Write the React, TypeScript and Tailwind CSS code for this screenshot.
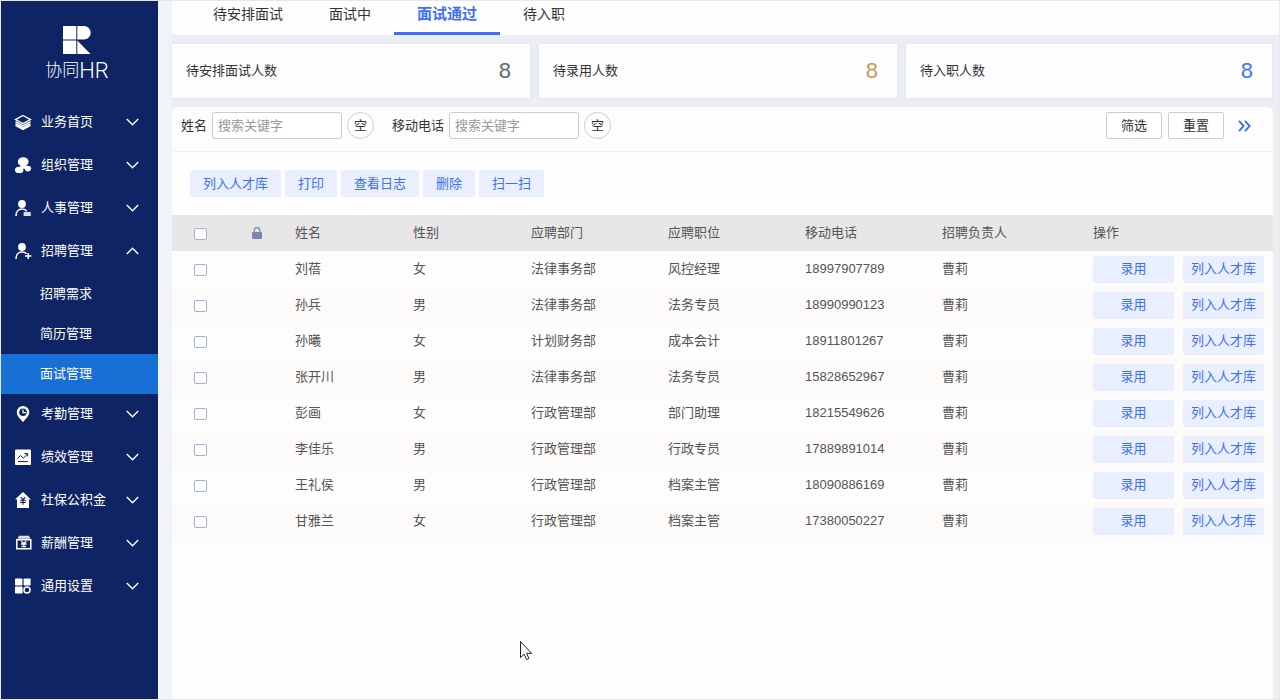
import cn from 'clsx'
import { FC, ReactNode } from 'react'

interface NavItem {
  name: string
  icon: ReactNode
  children?: string[]
}

interface Candidate {
  name: string
  sex: string
  dept: string
  position: string
  phone: string
  owner: string
}

const nav: NavItem[] = [
  {
    name: '业务首页',
    icon: (
      <>
        <path d="M8 1.5 15.5 5.6 8 9.6.5 5.6Z" fill="none" stroke="currentColor" strokeWidth="1.3" />
        <path d="M.5 7.6 8 11.6l7.5-4M.5 9.6 8 13.6l7.5-4M.5 11.4 8 15.4l7.5-4" fill="none" stroke="currentColor" strokeWidth="1.5" />
      </>
    ),
  },
  {
    name: '组织管理',
    icon: (
      <>
        <ellipse cx="8.2" cy="4.8" rx="5.4" ry="4.5" />
        <path d="M6 8h5l1 2.5-3 1.5-4-2Z" />
        <ellipse cx="4.2" cy="12.9" rx="4.2" ry="3.2" />
        <ellipse cx="12.9" cy="11.6" rx="3.2" ry="2.8" />
      </>
    ),
  },
  {
    name: '人事管理',
    icon: (
      <>
        <ellipse cx="7" cy="4" rx="3.9" ry="4" />
        <path d="M1 16C1 11.5 3.6 9 7 9c2.2 0 3.8.8 4.8 2.2" fill="none" stroke="currentColor" strokeWidth="1.5" />
        <rect x="8.6" y="12" width="7.2" height="4" fillOpacity=".85" />
      </>
    ),
  },
  {
    name: '招聘管理',
    icon: (
      <>
        <ellipse cx="7" cy="4" rx="3.9" ry="4" />
        <path d="M1 16C1 11.5 3.6 9 7 9c2.2 0 3.4.5 4.5 1.6M10 13h6.4M13.2 10v6" fill="none" stroke="currentColor" strokeWidth="1.5" />
      </>
    ),
    children: ['招聘需求', '简历管理', '面试管理'],
  },
  {
    name: '考勤管理',
    icon: (
      <>
        <path d="M8 0a6.2 6.2 0 0 0-6.2 6.2C1.8 10 5.5 13 8 16.2 10.5 13 14.2 10 14.2 6.2A6.2 6.2 0 0 0 8 0Z" />
        <circle cx="8" cy="6.2" r="3.8" className="fill-[#0f2464]" />
        <path d="M8 3.4v3.2h3" fill="none" stroke="currentColor" strokeWidth="1.2" />
      </>
    ),
  },
  {
    name: '绩效管理',
    icon: (
      <>
        <rect y=".5" width="16" height="15.5" rx="1" />
        <path d="M2.5 9.5 5.5 6.5 8.5 9.3 12.5 4.8M9.6 4.5h3v3M3 12.6h10" fill="none" stroke="#0f2464" strokeWidth="1" />
      </>
    ),
  },
  {
    name: '社保公积金',
    icon: (
      <>
        <path d="M8 0 16 7.5h-2V16H2V7.5H0Z" />
        <path d="M5.6 5.2 8 7.7l2.4-2.5M5.2 8.2h5.6M5.2 10.4h5.6M8 7.7v5" fill="none" stroke="#0f2464" strokeWidth="1.1" />
      </>
    ),
  },
  {
    name: '薪酬管理',
    icon: (
      <>
        <path d="M4 .8h10l1.5 3h-13Z" fillOpacity=".85" />
        <path d="M1.8 4.8h14v9H1.8Z" fill="none" stroke="currentColor" strokeWidth="1.5" />
        <path d="M6.2 6.2 8.8 8.4l2.6-2.2M6 9h5.6M6.5 11.6h4.6M8.8 8v4" fill="none" stroke="currentColor" strokeWidth="1.3" />
      </>
    ),
  },
  {
    name: '通用设置',
    icon: (
      <>
        <rect y=".5" width="7.4" height="7" rx=".8" />
        <rect x="8.6" y=".5" width="7" height="7" rx=".8" />
        <rect y="8.5" width="7.6" height="7" rx=".8" />
        <circle cx="12" cy="12" r="3" fill="none" stroke="currentColor" strokeWidth="1.5" />
      </>
    ),
  },
]

const tabs = ['待安排面试', '面试中', '面试通过', '待入职']

const stats = [
  { label: '待安排面试人数', value: 8, color: 'text-[#5f6f63]' },
  { label: '待录用人数', value: 8, color: 'text-[#c49c5a]' },
  { label: '待入职人数', value: 8, color: 'text-[#3d77f8]' },
]

const actions = ['列入人才库', '打印', '查看日志', '删除', '扫一扫']

const columns = ['姓名', '性别', '应聘部门', '应聘职位', '移动电话', '招聘负责人', '操作']

const candidates: Candidate[] = [
  { name: '刘蓓', sex: '女', dept: '法律事务部', position: '风控经理', phone: '18997907789', owner: '曹莉' },
  { name: '孙兵', sex: '男', dept: '法律事务部', position: '法务专员', phone: '18990990123', owner: '曹莉' },
  { name: '孙曦', sex: '女', dept: '计划财务部', position: '成本会计', phone: '18911801267', owner: '曹莉' },
  { name: '张开川', sex: '男', dept: '法律事务部', position: '法务专员', phone: '15828652967', owner: '曹莉' },
  { name: '彭画', sex: '女', dept: '行政管理部', position: '部门助理', phone: '18215549626', owner: '曹莉' },
  { name: '李佳乐', sex: '男', dept: '行政管理部', position: '行政专员', phone: '17889891014', owner: '曹莉' },
  { name: '王礼侯', sex: '男', dept: '行政管理部', position: '档案主管', phone: '18090886169', owner: '曹莉' },
  { name: '甘雅兰', sex: '女', dept: '行政管理部', position: '档案主管', phone: '17380050227', owner: '曹莉' },
]

const Chevron: FC<{ open?: boolean }> = ({ open }) => (
  <svg
    viewBox="0 0 13 8"
    className={cn('ml-auto h-2 w-[13px] shrink-0', open && 'rotate-180')}
    fill="none"
    stroke="currentColor"
    strokeWidth="1.4"
  >
    <path d="M.8 1l5.700 5.800L12.200 1" />
  </svg>
)

const Sidebar: FC = () => (
  <aside className="w-[157px] shrink-0 bg-[#0f2464] text-white">
    <div className="flex h-[101px] flex-col items-center pt-[25px] pr-[5px]">
      <svg viewBox="0 0 28 28" className="size-7" fill="currentColor">
        <path d="M0 0h13.3v13.5H0ZM14.3 0H21a6.75 6.75 0 0 1 0 13.5h-6.7ZM0 14.5h13.3V28H0ZM14.3 14.5 27.5 28H14.3Z" />
      </svg>
      <div className="mt-[5px] flex items-center leading-6 font-light">
        <span className="text-[17px]">协同</span>
        <span className="font-[Roboto] text-[22px]">HR</span>
      </div>
    </div>
    <nav>
      <ul>
        {nav.map((item) => (
          <li key={item.name}>
            <button
              type="button"
              className="mb-[3px] flex h-10 w-full items-center pr-[19px] pl-3.5"
            >
              <svg viewBox="0 0 16 16" className="size-4 shrink-0 overflow-visible" fill="currentColor">
                {item.icon}
              </svg>
              <span className="ml-2.5">{item.name}</span>
              <Chevron open={!!item.children} />
            </button>
            {item.children && (
              <ul>
                {item.children.map((child) => (
                  <li key={child}>
                    <a
                      href="#"
                      className={cn(
                        'flex h-10 items-center pl-[39px]',
                        child === '面试管理' && 'bg-[#186fd6]'
                      )}
                    >
                      {child}
                    </a>
                  </li>
                ))}
              </ul>
            )}
          </li>
        ))}
      </ul>
    </nav>
  </aside>
)

const SearchField: FC<{ id: string; label: string }> = ({ id, label }) => (
  <div className="flex items-center">
    <label htmlFor={id}>{label}</label>
    <input
      id={id}
      type="text"
      placeholder="搜索关键字"
      className="ml-[5px] h-[27px] w-[130px] rounded-[3px] border border-[#ccc] bg-white px-[5px] placeholder:text-[#999]"
    />
    <button
      type="button"
      className="ml-[5px] size-[27px] rounded-full border border-[#ccc] bg-white"
    >
      空
    </button>
  </div>
)

const Checkbox: FC<{ label: string }> = ({ label }) => (
  <input
    type="checkbox"
    aria-label={label}
    className="mx-auto mt-0.5 block h-3 w-[13px] appearance-none rounded-xs border border-[#9fb0d0] bg-white checked:bg-[#3d77f8]"
  />
)

const softButton = 'h-[27px] rounded-xs bg-[#e9effe] text-[#3e70f6]'

const CandidateTable: FC = () => (
  <table className="w-full table-fixed text-left text-[#555]">
    <colgroup>
      <col className="w-[56px]" />
      <col className="w-[58px]" />
      <col className="w-[118px]" />
      <col className="w-[118px]" />
      <col className="w-[137px]" />
      <col className="w-[137px]" />
      <col className="w-[137px]" />
      <col className="w-[151px]" />
      <col className="w-[189px]" />
    </colgroup>
    <thead>
      <tr className="h-9 bg-[#e7e7e7]">
        <th>
          <Checkbox label="全选" />
        </th>
        <th>
          <svg viewBox="0 0 10 12" className="mx-auto h-3 w-2.5 text-[#7c88ab]">
            <rect y="5" width="10" height="7" rx="1" fill="currentColor" />
            <path d="M2.2 5.5V3.5a2.8 2.8 0 0 1 5.6 0v2" fill="none" stroke="currentColor" strokeWidth="1.3" />
          </svg>
        </th>
        {columns.map((column) => (
          <th key={column} className="pl-[9px] font-normal">
            {column}
          </th>
        ))}
      </tr>
    </thead>
    <tbody>
      {candidates.map((c) => (
        <tr key={c.phone} className="h-9 even:bg-[#fcfbf9]">
          <td>
            <Checkbox label={c.name} />
          </td>
          <td />
          <td className="pl-[9px]">{c.name}</td>
          <td className="pl-[9px]">{c.sex}</td>
          <td className="pl-[9px]">{c.dept}</td>
          <td className="pl-[9px]">{c.position}</td>
          <td className="pl-[9px]">{c.phone}</td>
          <td className="pl-[9px]">{c.owner}</td>
          <td className="px-[9px]">
            <div className="flex gap-[9px]">
              <button type="button" className={cn(softButton, 'flex-1')}>
                录用
              </button>
              <button type="button" className={cn(softButton, 'flex-1')}>
                列入人才库
              </button>
            </div>
          </td>
        </tr>
      ))}
    </tbody>
  </table>
)

const App: FC = () => (
  <div className="relative flex h-screen overflow-hidden border border-[#e6e8ea] bg-[#edeef4] [font-family:'Liberation_Sans','Noto_Sans_CJK_SC',sans-serif] text-[13px] leading-5 text-[#333]">
    <Sidebar />
    <div className="w-3.5 shrink-0 bg-[#f0f4f8]" />
    <main className="flex min-w-0 flex-1 flex-col">
      <nav className="flex rounded-bl-sm bg-[#fdfdfd] pl-[18px] text-sm">
        {tabs.map((tab) => (
          <a
            key={tab}
            href="#"
            className={cn(
              'flex h-[34px] items-center border-b-3 px-[23px] pb-[5px]',
              tab === '面试通过'
                ? 'border-[#3e70f6] text-[15px] font-bold text-[#3e70f6]'
                : 'border-transparent'
            )}
          >
            {tab}
          </a>
        ))}
      </nav>
      <section className="mt-[9px] mr-[7px] grid grid-cols-[358fr_358fr_366fr] gap-[9px]">
        {stats.map((stat) => (
          <div
            key={stat.label}
            className="flex h-[54px] items-center justify-between bg-[#fdfdfd] pr-[19px] pl-3.5 shadow-[0_0_4px_#d5e2f2]"
          >
            <span>{stat.label}</span>
            <span className={cn('text-[22px]', stat.color)}>{stat.value}</span>
          </div>
        ))}
      </section>
      <section className="mt-[9px] mr-[6px] flex-1 rounded-t-md bg-[#fdfdfd]">
        <form className="flex h-[45px] items-start border-b border-[#eff3f9] pt-[5px] pr-[22px] pl-[9px]">
          <div className="flex gap-[18px]">
            <SearchField id="name" label="姓名" />
            <SearchField id="phone" label="移动电话" />
          </div>
          <div className="ml-auto flex items-center gap-1.5">
            <button type="button" className="h-[27px] w-14 rounded-xs border border-[#ccc] bg-white">
              筛选
            </button>
            <button type="reset" className="h-[27px] w-14 rounded-xs border border-[#ccc] bg-white">
              重置
            </button>
            <button type="button" aria-label="展开" className="ml-2 text-[#3e70f6]">
              <svg viewBox="0 0 13 12" className="h-3 w-[13px]" fill="none" stroke="currentColor" strokeWidth="1.9">
                <path d="M1 .8 5.6 6 1 11.2M7 .8 11.6 6 7 11.2" />
              </svg>
            </button>
          </div>
        </form>
        <div className="flex gap-1 px-[18px] py-[18px]">
          {actions.map((action) => (
            <button key={action} type="button" className={cn(softButton, 'px-[13px]')}>
              {action}
            </button>
          ))}
        </div>
        <CandidateTable />
      </section>
    </main>
    <svg viewBox="0 0 12 19" className="pointer-events-none absolute top-[640px] left-[519px] h-[19px] w-3">
      <path
        d="M.5.5v16.2l3.6-3.5 2.4 5.3 2.4-1-2.3-5.2h5Z"
        fill="#fff"
        stroke="#222"
        strokeWidth="1"
      />
    </svg>
  </div>
)

export default App
